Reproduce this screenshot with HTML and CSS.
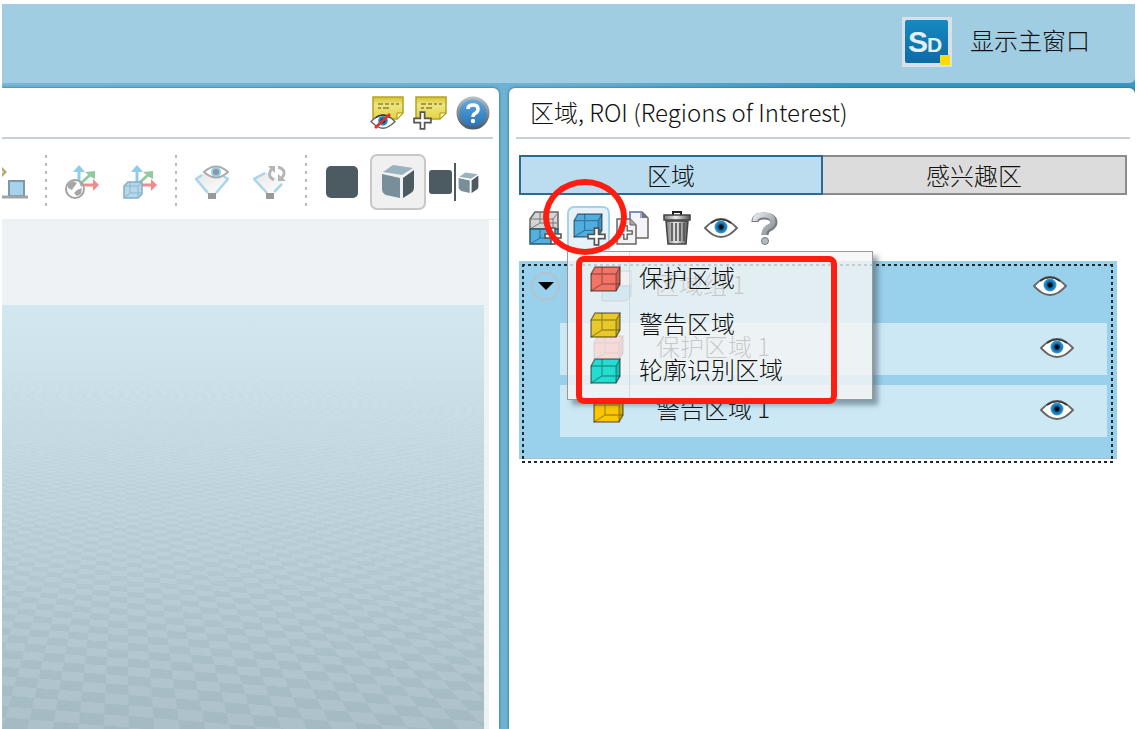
FILE: index.html
```html
<!DOCTYPE html>
<html lang="zh-CN">
<head>
    <meta charset="UTF-8">
    <meta name="viewport" content="width=device-width, initial-scale=1.0">
    <title>区域, ROI</title>
    <link rel="stylesheet" href="styles.css">
</head>
<body>
    <!-- shared icons -->
    <svg class="sprite" aria-hidden="true">
        <defs>
            <linearGradient id="gNote" x1="0" y1="0" x2="0" y2="1"><stop offset="0" stop-color="#d6c22e"/><stop offset=".35" stop-color="#efe583"/><stop offset="1" stop-color="#e3d340"/></linearGradient>
            <linearGradient id="gHelp" x1="0" y1="0" x2="0" y2="1"><stop offset="0" stop-color="#6baede"/><stop offset=".5" stop-color="#3f8dca"/><stop offset="1" stop-color="#2b70b4"/></linearGradient>
            <linearGradient id="gRim" x1="0" y1="0" x2="0" y2="1"><stop offset="0" stop-color="#b5bcc1"/><stop offset="1" stop-color="#4f5b66"/></linearGradient>
            <linearGradient id="gLogo" x1="0" y1="0" x2="0" y2="1"><stop offset="0" stop-color="#1689c0"/><stop offset="1" stop-color="#0d6aa5"/></linearGradient>
            <linearGradient id="gMetal" x1="0" y1="0" x2="1" y2="0"><stop offset="0" stop-color="#777"/><stop offset=".45" stop-color="#eee"/><stop offset="1" stop-color="#555"/></linearGradient>
            <linearGradient id="gGray" x1="0" y1="0" x2="1" y2="1"><stop offset="0" stop-color="#e4e8ec"/><stop offset="1" stop-color="#83898f"/></linearGradient>
            <linearGradient id="gFunnel" x1="0" y1="0" x2="1" y2="1"><stop offset="0" stop-color="#e6e6e6"/><stop offset="1" stop-color="#fff"/></linearGradient>
            <radialGradient id="gIris"><stop offset="0" stop-color="#000"/><stop offset=".3" stop-color="#02121f"/><stop offset=".5" stop-color="#0868a6"/><stop offset="1" stop-color="#3ba0d8"/></radialGradient>
        </defs>
        <symbol id="cube" viewBox="0 0 32 26">
            <path d="M1 8 5 1H30V18L26 25H1Z" fill="currentColor" stroke="#000" stroke-opacity=".45" stroke-width="1.5"/>
            <path d="M26 8 30 1V18L26 25Z" fill="#000" fill-opacity=".15"/>
            <path d="M1 8H26L30 1M26 8V25M12 1V18H30M12 18 1 25" fill="none" stroke="#000" stroke-opacity=".3" stroke-width="1.3"/>
        </symbol>
        <symbol id="plus" viewBox="0 0 18 18">
            <path d="M7 1H11V7H17V11H11V17H7V11H1V7H7Z" fill="#fff" stroke="#555" stroke-width="1.6"/>
        </symbol>
        <symbol id="eye" viewBox="0 0 34 20">
            <path d="M1 10C7 4 11 1 17 1S27 4 33 10C27 16 23 19 17 19S7 16 1 10Z" fill="#fff" stroke="#666" stroke-width="1.8"/>
            <path d="M7 5Q17-2 27 5" fill="none" stroke="#333" stroke-width="1.6"/>
            <circle cx="17" cy="9" r="6.5" fill="url(#gIris)"/>
        </symbol>
        <symbol id="note" viewBox="0 0 32 24">
            <path d="M1 1H31V17L25 23H1Z" fill="url(#gNote)" stroke="#b5a21c" stroke-width="1.5"/>
            <path d="M31 17H25V23Z" fill="#fff6b0" stroke="#a8951a"/>
            <path d="M6 8H11M13 8H17M19 8H22M24 8H27M6 12H9M11 12H17" stroke="#8b8238" stroke-width="1.3"/>
        </symbol>
        <symbol id="axes" viewBox="0 0 34 34">
            <path d="M14 20V6" stroke="#8fcbea" stroke-width="3"/><path d="M8 7 14 0 20 7Z" fill="#8fcbea"/>
            <path d="M15 19 25 10" stroke="#93c99f" stroke-width="3"/><path d="M20 7 30 6V14L26 12Z" fill="#93c99f"/>
            <path d="M16 20H28" stroke="#f28b8b" stroke-width="3"/><path d="M28 14 34 20 28 26Z" fill="#f28b8b"/>
        </symbol>
        <symbol id="solid" viewBox="0 0 34 34">
            <path d="M1 9 19 13V33L5 30Q1 28 1 24Z" fill="#788e9a"/>
            <path d="M22 13 33 5V23Q33 26 30 28L22 33Z" fill="#4c5a62"/>
            <path d="M2 7 12 0 32 3 21 10Z" fill="#98b2c0"/>
        </symbol>
    </svg>

    <div class="app">
        <header class="titlebar">
            <button class="main-window">
                <svg width="50" height="50" viewBox="0 0 50 50">
                    <rect width="50" height="50" fill="#dbe0e5"/>
                    <rect x="3" y="3" width="43" height="43" rx="2" fill="url(#gLogo)"/>
                    <text x="6" y="35" class="logo-text" font-size="30">S</text>
                    <text x="25" y="35" class="logo-text" font-size="21">D</text>
                    <rect x="38" y="38" width="10" height="10" fill="#ffdc00"/>
                </svg>
                <span>显示主窗口</span>
            </button>
        </header>

        <main class="workspace">
            <section class="panel view-panel">
                <div class="panel-head note-bar">
                    <button aria-label="隐藏注释">
                        <svg width="34" height="34" viewBox="0 0 34 34">
                            <use href="#note" x="2" y="0" width="32" height="24"/>
                            <use href="#eye" x="0" y="18" width="26" height="15"/>
                            <path d="M5 32 20 18" stroke="#e3342a" stroke-width="3"/>
                        </svg>
                    </button>
                    <button aria-label="添加注释">
                        <svg width="34" height="34" viewBox="0 0 34 34">
                            <use href="#note" x="2" y="0" width="32" height="24"/>
                            <use href="#plus" x="0" y="15" width="19" height="19"/>
                        </svg>
                    </button>
                    <button aria-label="帮助">
                        <svg width="34" height="34" viewBox="0 0 34 34">
                            <circle cx="17" cy="17" r="15" fill="url(#gHelp)" stroke="url(#gRim)" stroke-width="3"/>
                            <path d="M12 13Q12 9 17 9T22 13Q22 16 19 17.500Q17 18.500 17 21" fill="none" stroke="#fff" stroke-width="3.500"/>
                            <circle cx="17" cy="25" r="2.200" fill="#fff"/>
                        </svg>
                    </button>
                </div>

                <div class="view-tools">
                    <button class="view-tool cut" aria-label="设备">
                        <svg width="26" height="34" viewBox="0 0 26 34">
                            <path d="M0 2 5 7 0 12Z" fill="#aaa58d"/>
                            <path d="M0 5 2 7 0 9Z" fill="#eee06b"/>
                            <rect x="7" y="16" width="15" height="15" fill="#a5d3ec" stroke="#7d98a6" stroke-width="2"/>
                            <path d="M0 32H26" stroke="#a0a4a6" stroke-width="3"/>
                        </svg>
                    </button>
                    <span class="separator"></span>
                    <div class="tool-group">
                        <button class="view-tool" aria-label="全局坐标">
                            <svg width="34" height="34" viewBox="0 0 34 34">
                                <use href="#axes" width="34" height="34"/>
                                <circle cx="10" cy="24" r="9" fill="#fff" stroke="#a3a3a3" stroke-width="2"/>
                                <path d="M3 19 8 16 12 18 9 22 7 25 3 23ZM12 25 17 23 16 29 12 31 9 28ZM14 17 18 20 16 22Z" fill="#a6a6a6"/>
                            </svg>
                        </button>
                        <button class="view-tool" aria-label="局部坐标">
                            <svg width="34" height="34" viewBox="0 0 34 34">
                                <use href="#axes" width="34" height="34"/>
                                <path d="M1 21 5 17H19V29L15 33H1Z" fill="#b5d7ea" stroke="#84aec8" stroke-width="1.500"/>
                                <path d="M1 21H15L19 17M15 21V33M7 17V28H19M7 28 1 33" fill="none" stroke="#8fb5cb"/>
                            </svg>
                        </button>
                    </div>
                    <span class="separator"></span>
                    <div class="tool-group">
                        <button class="view-tool" aria-label="显示过滤">
                            <svg width="34" height="34" viewBox="0 0 34 34">
                                <path d="M1 14 7 9H27L33 14 19 28H14Z" fill="url(#gFunnel)"/>
                                <path d="M7 10 1 14 13 28M27 10 33 14 21 28" fill="none" stroke="#a9d5ec" stroke-width="2.500"/>
                                <rect x="13" y="28" width="8" height="6" fill="#999"/>
                                <path d="M9 7Q21-4 33 7Q21 18 9 7Z" fill="#fff" stroke="#aaa" stroke-width="2"/>
                                <circle cx="21" cy="7" r="4" fill="#8b979f" stroke="#92cae8" stroke-width="2"/>
                            </svg>
                        </button>
                        <button class="view-tool" aria-label="重置过滤">
                            <svg width="34" height="34" viewBox="0 0 34 34">
                                <path d="M1 14 12 7 31 18 19 28H14Z" fill="url(#gFunnel)"/>
                                <path d="M12 8 1 14 14 28M21 27 29 19" fill="none" stroke="#a9d5ec" stroke-width="2.500"/>
                                <rect x="13" y="28" width="8" height="6" fill="#999"/>
                                <path d="M21 15Q15 12 17 7 18 3 22 3M25 2Q32 4 31 9 30 13 26 15" fill="none" stroke="#b5b5b5" stroke-width="3"/>
                                <path d="M15 1H22V8ZM33 16H25V9Z" fill="#b5b5b5"/>
                            </svg>
                        </button>
                    </div>
                    <span class="separator"></span>
                    <div class="tool-group tight">
                        <button class="view-tool" aria-label="2D">
                            <svg width="34" height="34" viewBox="0 0 34 34"><rect x="1" y="1" width="32" height="32" rx="5" fill="#4c5a62"/></svg>
                        </button>
                        <button class="view-tool active" aria-label="3D">
                            <svg width="34" height="34"><use href="#solid" width="34" height="34"/></svg>
                        </button>
                        <button class="view-tool" aria-label="2D 3D">
                            <svg width="50" height="38" viewBox="0 0 50 38">
                                <rect x="0" y="7" width="23" height="24" rx="3" fill="#4c5a62"/>
                                <path d="M26 0V38" stroke="#4c5a62" stroke-width="2"/>
                                <use href="#solid" x="29" y="9" width="21" height="22"/>
                            </svg>
                        </button>
                    </div>
                </div>

                <div class="viewport">
                    <div class="scene"><div class="ground"><div class="tiles"></div></div></div>
                </div>
            </section>

            <section class="panel region-panel">
                <h1 class="panel-head">区域, ROI (Regions of Interest)</h1>
                <div class="tabs">
                    <button class="tab selected">区域</button>
                    <button class="tab">感兴趣区</button>
                </div>

                <div class="region-tools">
                    <button class="region-tool" aria-label="添加区域组">
                        <svg width="34" height="34" viewBox="0 0 34 34">
                            <path d="M2 8 7 1H30V18H2Z" fill="#d4d4d4" stroke="#666" stroke-width="1.500"/>
                            <path d="M2 8H25L30 2M25 8V18M12 1V12H30M12 12 2 18" fill="none" stroke="#777"/>
                            <path d="M2 18H30V27L25 33H2Z" fill="#55b0e0" stroke="#27586f" stroke-width="1.500"/>
                            <path d="M25 19V33M12 19V27H30M12 27 2 33" fill="none" stroke="#2b6d90"/>
                            <use href="#plus" x="16" y="16" width="18" height="18"/>
                        </svg>
                    </button>
                    <div class="menu-anchor">
                        <button class="region-tool open" aria-label="添加区域" aria-expanded="true">
                            <svg class="blue" width="34" height="34" viewBox="0 0 34 34">
                                <use href="#cube" x="1" y="1" width="31" height="25"/>
                                <use href="#plus" x="15" y="15" width="19" height="19"/>
                            </svg>
                        </button>
                        <div class="menu" role="menu">
                            <button class="menu-item" role="menuitem"><svg class="red" width="32" height="26"><use href="#cube"/></svg><span>保护区域</span></button>
                            <button class="menu-item" role="menuitem"><svg class="yellow" width="32" height="26"><use href="#cube"/></svg><span>警告区域</span></button>
                            <button class="menu-item" role="menuitem"><svg class="teal" width="32" height="26"><use href="#cube"/></svg><span>轮廓识别区域</span></button>
                            <span class="mark-box"></span>
                        </div>
                        <span class="mark-circle"></span>
                    </div>
                    <button class="region-tool" aria-label="复制">
                        <svg width="34" height="34" viewBox="0 0 34 34">
                            <path d="M14 1H26L32 7V27H14Z" fill="#f4f4f8" stroke="#666" stroke-width="1.500"/>
                            <path d="M14 18V1H25V7" fill="none" stroke="#7b8fce" stroke-width="1.500"/><path d="M26 1V7H32Z" fill="#777"/>
                            <path d="M1 8H14L20 14V33H1Z" fill="#f2f2f2" stroke="#666" stroke-width="1.500"/>
                            <path d="M14 8V14H20" fill="#aaa" stroke="#666"/>
                            <use href="#plus" x="2" y="14" width="15" height="15"/>
                        </svg>
                    </button>
                    <button class="region-tool" aria-label="删除">
                        <svg width="28" height="34" viewBox="0 0 28 34">
                            <path d="M3 10H25L23 33H5Z" fill="url(#gMetal)" stroke="#444" stroke-width="1.500"/>
                            <path d="M9 12V30M13 12V30M17 12V30M21 12V30" stroke="#555" stroke-width="1.700"/>
                            <path d="M10 4V1H18V4" fill="none" stroke="#222" stroke-width="2"/>
                            <path d="M1 4H27V9H1Z" fill="url(#gMetal)" stroke="#444" stroke-width="1.500"/>
                        </svg>
                    </button>
                    <button class="region-tool" aria-label="显示"><svg width="34" height="20"><use href="#eye"/></svg></button>
                    <button class="region-tool" aria-label="帮助">
                        <svg width="28" height="34" viewBox="0 0 28 34">
                            <path d="M4 11Q4 5 13 5T23 11Q23 15 18 17Q14 19 14 24" fill="none" stroke="#74797e" stroke-width="7"/>
                            <path d="M4 10Q4 4 13 4T22 11Q22 14 18 16Q13 18 13 24" fill="none" stroke="url(#gGray)" stroke-width="5"/>
                            <circle cx="14" cy="30" r="3.500" fill="#b5babf" stroke="#74797e"/>
                        </svg>
                    </button>
                </div>

                <div class="region-group">
                    <div class="group-row">
                        <button class="toggle" aria-label="折叠"><svg width="16" height="8" viewBox="0 0 16 8"><path d="M0 0H16L8 8Z"/></svg></button>
                        <svg class="group-icon" width="32" height="32" viewBox="0 0 32 32">
                            <path d="M1 8 5 1H30V16H1Z" fill="#ddd" stroke="#555"/>
                            <path d="M1 16H30V26L25 31H1Z" fill="#55b0e0" stroke="#27586f"/>
                        </svg>
                        <span class="name">区域组 1</span>
                        <button class="visibility" aria-label="显示区域组"><svg width="34" height="20"><use href="#eye"/></svg></button>
                    </div>
                    <div class="region-row">
                        <svg class="red" width="32" height="26"><use href="#cube"/></svg>
                        <span class="name">保护区域 1</span>
                        <button class="visibility" aria-label="显示保护区域"><svg width="34" height="20"><use href="#eye"/></svg></button>
                    </div>
                    <div class="region-row">
                        <svg class="gold" width="32" height="26"><use href="#cube"/></svg>
                        <span class="name">警告区域 1</span>
                        <button class="visibility" aria-label="显示警告区域"><svg width="34" height="20"><use href="#eye"/></svg></button>
                    </div>
                </div>
            </section>
        </main>
    </div>
</body>
</html>
```
FILE: styles.css
```css
* {
    box-sizing: border-box;
}
body {
    margin: 0;
    padding: 4px 2px 0;
    background-color: #fff;
    color: #111;
    font-family: "Noto Sans CJK SC", "Noto Sans", sans-serif;
    font-size: 24px;
    font-weight: 300;
    line-height: 32px;
}
button {
    display: flex;
    align-items: center;
    justify-content: center;
    margin: 0;
    padding: 0;
    border: 0;
    background: none;
    color: inherit;
    font: inherit;
}
svg {
    flex: none;
}
.sprite {
    position: absolute;
    width: 0;
    height: 0;
}
.red { color: #f37466; }
.yellow { color: #e8c92c; }
.gold { color: #fbc800; }
.teal { color: #22ddd0; }
.blue { color: #4fade0; }

.app {
    display: flex;
    flex-direction: column;
    height: calc(100vh - 4px);
    overflow: hidden;
    background: linear-gradient(to right, #74b7d6, #6cb1d2 50%, #3897c4 75%);
}
.titlebar {
    display: flex;
    flex: none;
    justify-content: flex-end;
    height: 79px;
    padding: 0 45px 4px 0;
    border-radius: 0 0 5px 0;
    background-color: #a1cde2;
}
.main-window {
    gap: 18px;
}
.main-window span,
.menu-item span,
.name {
    padding-bottom: 4px;
}
.logo-text {
    fill: #e2eef6;
    font-family: "Liberation Sans", sans-serif;
    font-weight: bold;
}

.workspace {
    display: grid;
    flex: 1;
    grid-template-columns: 497fr 626fr;
    gap: 10px;
    min-height: 0;
    padding-top: 5px;
}
.panel {
    display: flex;
    flex-direction: column;
    min-width: 0;
    background-color: #fff;
    box-shadow: 0 0 3px #315e75;
}
.view-panel {
    overflow: hidden;
    border-radius: 0 6px 0 0;
}
.region-panel {
    border-radius: 6px 6px 0 0;
}
.panel-head {
    flex: none;
    height: 51px;
    border-bottom: 2px solid #c9cfd2;
}

/* left side */
.note-bar {
    display: flex;
    align-items: center;
    justify-content: flex-end;
    gap: 9px;
    margin-right: 6px;
    padding-right: 3px;
}
.view-tools {
    display: flex;
    flex: none;
    align-items: center;
    height: 81px;
    padding-top: 6px;
    border-bottom: 1px solid #f0f0f0;
}
.view-tool {
    width: 56px;
    height: 56px;
    border: 2px solid transparent;
    border-radius: 7px;
}
.view-tool.cut {
    justify-content: flex-start;
    width: 36px;
    border: 0;
}
.view-tool.active {
    border-color: #c8c8c8;
    background-color: #f0f0f0;
}
.tool-group {
    display: flex;
    gap: 2px;
}
.tool-group.tight {
    gap: 0;
}
.separator {
    display: flex;
    justify-content: center;
    width: 16px;
}
.separator::before {
    content: "";
    width: 2px;
    height: 54px;
    background: repeating-linear-gradient(#b3bcc2 0 3px, transparent 3px 8px);
}
.viewport {
    display: flex;
    flex: 1;
    margin-right: 10px;
    padding: 85px 5px 0 0;
    background-color: #eef2f5;
}
.scene {
    flex: 1;
    overflow: hidden;
    background: linear-gradient(#d2e7ef, #cee3eb 12%, #c0d5dd 46%, #b4c9d1 75%, #acc1c9);
}
.ground {
    position: relative;
    height: 100%;
    overflow: hidden;
    perspective: 880px;
    perspective-origin: -7% 0;
    -webkit-mask-image: linear-gradient(transparent 10%, #000 90%);
    mask-image: linear-gradient(transparent 10%, #000 90%);
}
/* checkered floor, laid flat and running back to the horizon */
.tiles {
    position: absolute;
    bottom: -400px;
    left: -3000px;
    width: 6000px;
    height: 5000px;
    background: repeating-conic-gradient(rgba(100, 130, 140, 0.1) 0 25%, transparent 0 50%) 0 0 / 50px 50px;
    transform: rotateX(90deg) rotateZ(10deg);
    transform-origin: 50% 4600px;
}

/* right side */
h1.panel-head {
    margin: 0 5px 0 7px;
    padding: 8px 14px;
    font-size: 24px;
    font-weight: 300;
}
.tabs {
    display: grid;
    grid-template-columns: 1fr 1fr;
    margin: 16px 8px 0 10px;
}
.tab {
    height: 40px;
    border: 2px solid #8b8b8b;
    border-left-width: 0;
    background-color: #dcdcdc;
}
.tab.selected {
    border: 2px solid #2b6a92;
    background-color: #bbddef;
}
.region-tools {
    display: flex;
    gap: 1px;
    padding: 11px 14px 0;
}
.region-tool {
    width: 43px;
    height: 44px;
    border: 2px solid transparent;
    border-radius: 7px;
}
.region-tool.open {
    border-color: #a5d3ea;
    border-bottom: 0;
    border-radius: 7px 7px 0 0;
    background-color: #e5f2fa;
}
.menu-anchor {
    position: relative;
    z-index: 1;
}
.menu {
    position: absolute;
    top: 45px;
    left: 0;
    width: 306px;
    padding: 4px 0 5px;
    border: 1px solid #999;
    background: linear-gradient(to right, transparent 61px, rgba(180, 200, 210, 0.5) 61px 62px, transparent 62px), rgba(245, 245, 245, 0.8);
    box-shadow: 5px 5px 5px rgba(60, 80, 95, 0.5);
}
.menu-item {
    justify-content: flex-start;
    gap: 17px;
    width: 100%;
    height: 46px;
    padding-left: 22px;
}
.mark-box,
.mark-circle {
    position: absolute;
    border: 6px solid #ff1d12;
    pointer-events: none;
}
.mark-box {
    inset: 4px 35px -5px 8px;
    border-radius: 8px;
}
.mark-circle {
    top: -27px;
    left: -24px;
    width: 84px;
    height: 76px;
    border-radius: 50%;
}
.region-group {
    position: relative;
    display: flex;
    flex-direction: column;
    gap: 10px;
    margin: 11px 18px 0 10px;
    padding-bottom: 21px;
    border-bottom: 1px solid #aebcc4;
    background-color: #99d0eb;
}
/* dotted selection frame: top, bottom, left, right */
.region-group::after {
    content: "";
    position: absolute;
    inset: 3px 4px -5px 3px;
    background:
        repeating-linear-gradient(to right, #1c2a31 0 3px, transparent 3px 6px) top / 100% 2px no-repeat,
        repeating-linear-gradient(to right, #1c2a31 0 3px, transparent 3px 6px) bottom / 100% 2px no-repeat,
        repeating-linear-gradient(#1c2a31 0 3px, transparent 3px 6px) left / 2px 100% no-repeat,
        repeating-linear-gradient(#1c2a31 0 3px, transparent 3px 6px) right / 2px 100% no-repeat;
    pointer-events: none;
}
.group-row,
.region-row {
    display: flex;
    align-items: center;
    height: 52px;
    padding-bottom: 2px;
}
.group-row {
    padding-right: 50px;
    padding-left: 12px;
}
.toggle {
    width: 29px;
    height: 29px;
    border: 2px solid #b3c3cc;
    border-radius: 50%;
}
.group-icon {
    margin-left: 41px;
}
.group-row .name {
    margin-left: 22px;
}
.region-row {
    margin: 0 10px 0 41px;
    padding-right: 33px;
    padding-left: 33px;
    background-color: #cce8f5;
}
.region-row .name {
    margin-left: 31px;
}
.visibility {
    margin-left: auto;
}
```
